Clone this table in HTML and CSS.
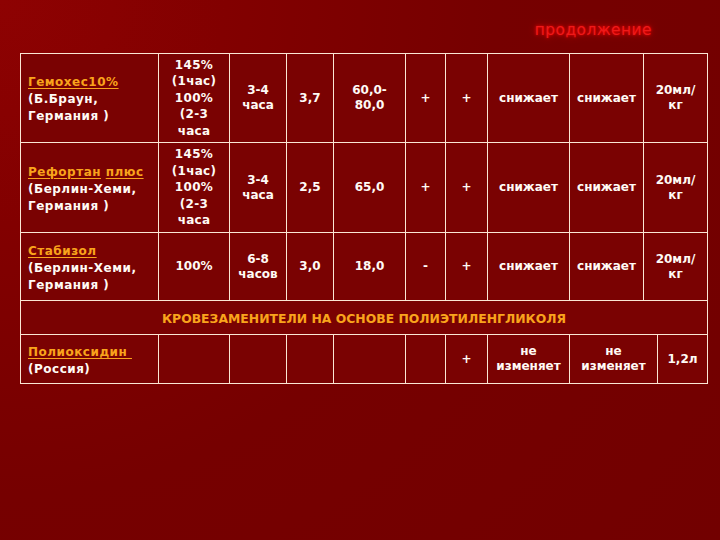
FILE: index.html
```html
<!DOCTYPE html>
<html lang="ru">
<head>
<meta charset="utf-8">
<title>продолжение</title>
<link rel="stylesheet" href="styles.css">
</head>
<body>
<div class="slide">
  <div class="title">продолжение</div>
  <table class="grid">
    <colgroup>
      <col class="c1"><col class="c2"><col class="c3"><col class="c4"><col class="c5"><col class="c6"><col class="c7"><col class="c8"><col class="c9"><col class="c10"><col class="c11">
    </colgroup>
    <tr class="r1">
      <td class="name"><span class="link">Гемохес10%</span><br>(Б.Браун,<br>Германия )</td>
      <td class="tall">145%<br>(1час)<br>100%<br>(2-3<br>часа</td>
      <td>3-4<br>часа</td>
      <td>3,7</td>
      <td>60,0-<br>80,0</td>
      <td>+</td>
      <td>+</td>
      <td>снижает</td>
      <td>снижает</td>
      <td colspan="2">20мл/<br>кг</td>
    </tr>
    <tr class="r2">
      <td class="name"><span class="link">Рефортан</span> <span class="link">плюс</span><br>(Берлин-Хеми,<br>Германия )</td>
      <td class="tall">145%<br>(1час)<br>100%<br>(2-3<br>часа</td>
      <td>3-4<br>часа</td>
      <td>2,5</td>
      <td>65,0</td>
      <td>+</td>
      <td>+</td>
      <td>снижает</td>
      <td>снижает</td>
      <td colspan="2">20мл/<br>кг</td>
    </tr>
    <tr class="r3">
      <td class="name"><span class="link">Стабизол</span><br>(Берлин-Хеми,<br>Германия )</td>
      <td>100%</td>
      <td>6-8<br>часов</td>
      <td>3,0</td>
      <td>18,0</td>
      <td>-</td>
      <td>+</td>
      <td>снижает</td>
      <td>снижает</td>
      <td colspan="2">20мл/<br>кг</td>
    </tr>
    <tr class="r4">
      <td class="section" colspan="11">КРОВЕЗАМЕНИТЕЛИ НА ОСНОВЕ ПОЛИЭТИЛЕНГЛИКОЛЯ</td>
    </tr>
    <tr class="r5">
      <td class="name"><span class="link">Полиоксидин&nbsp;</span><br>(Россия)</td>
      <td></td>
      <td></td>
      <td></td>
      <td></td>
      <td></td>
      <td>+</td>
      <td>не<br>изменяет</td>
      <td colspan="2">не<br>изменяет</td>
      <td>1,2л</td>
    </tr>
  </table>
</div>
</body>
</html>
```

FILE: styles.css
```css
html, body {
  margin: 0;
  padding: 0;
}

body {
  width: 720px;
  height: 540px;
  overflow: hidden;
  background: radial-gradient(circle at 0 0, #8e0202 0%, #820000 25%, #760000 55%, #720000 100%);
  font-family: "DejaVu Sans", Verdana, sans-serif;
  color: #ffffff;
}

.slide {
  padding: 0 0 0 20px;
}

.title {
  height: 53px;
  box-sizing: border-box;
  padding: 20px 68px 0 0;
  text-align: right;
  font-size: 15.5px;
  line-height: 20px;
  color: #ee1a1a;
  letter-spacing: 0.4px;
  text-shadow: 0 0 3px #ff0000, 0 0 7px #d00000;
}

.grid {
  border-collapse: collapse;
  table-layout: fixed;
  width: 687px;
  background: #7a0202;
}

.grid td {
  border: 1px solid #fbe6d4;
  padding: 0;
  text-align: center;
  vertical-align: middle;
  font-weight: bold;
  font-size: 12px;
  line-height: 15px;
  color: #fffaf5;
}

.c1 { width: 138px; }
.c2 { width: 71px; }
.c3 { width: 57px; }
.c4 { width: 47px; }
.c5 { width: 72px; }
.c6 { width: 40px; }
.c7 { width: 42px; }
.c8 { width: 82px; }
.c9 { width: 74px; }
.c10 { width: 14px; }
.c11 { width: 50px; }

.r1 { height: 89px; }
.r2 { height: 90px; }
.r3 { height: 68px; }
.r4 { height: 34px; }
.r5 { height: 49px; }

.grid td.name {
  text-align: left;
  padding: 3px 0 0 7px;
  line-height: 17px;
  letter-spacing: 0.5px;
}

.grid td.tall {
  line-height: 16.5px;
  letter-spacing: 0.3px;
}

.link {
  color: #f9a41c;
  text-decoration: underline;
  text-underline-offset: 2px;
}

.grid td.section {
  color: #f9a41c;
  font-size: 12.4px;
  padding-top: 1px;
}
```
